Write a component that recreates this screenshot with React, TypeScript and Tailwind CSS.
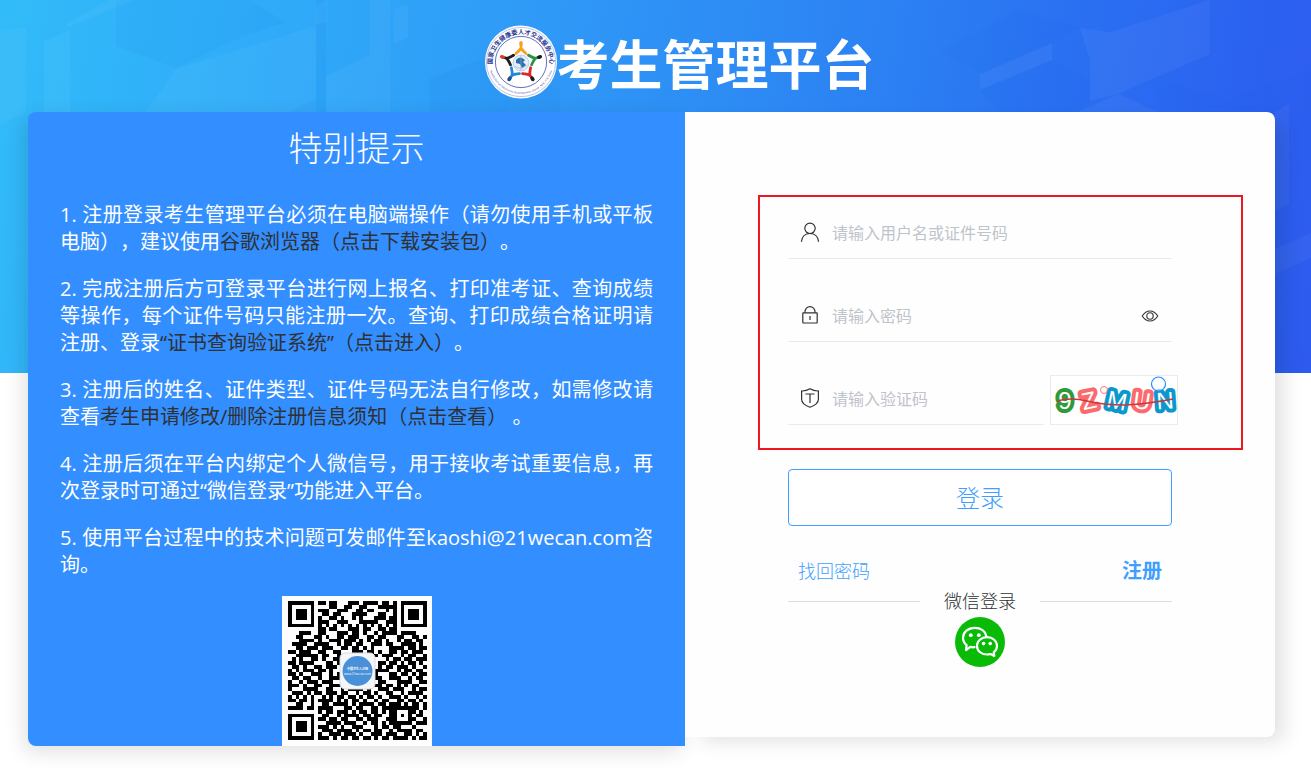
import React, { useState } from "react";

const QR_ROWS = [
  "1111111011011000111011110110101111111",
  "1000001000011001100110001111101000001",
  "1011101011100111001101100010101011101",
  "1011101001101100011110001100101011101",
  "1011101010011010010100011101101011101",
  "1000001011100111000111110011101000001",
  "1111111010101010101010101010101111111",
  "0000000011011000111011001101100000000",
  "0001110011000111011010010111101111000",
  "0011000110100110111001101100011001101",
  "0001111010011101110101011010010110110",
  "0111100111100101101100111011001111010",
  "0011011101110011011010100001111011011",
  "1101110011001100011101101001101101110",
  "0011111101100110010011010111001011001",
  "0101001101001111011110100010110110111",
  "1101111000110111110001101101101011010",
  "0110100110111001011011001011011101001",
  "1010111011010011000111011110010110110",
  "1101001110010110110101110001101101011",
  "0110110010011101011011011001110010110",
  "1001011101110001110110001100011110011",
  "1110100110011110001010111011010101100",
  "1000111100110010111101001110111001011",
  "0111010110111011001011010011001011110",
  "1010101001010110110101101001110100101",
  "1101101011110101011010010110011011010",
  "0011001001101111010111101101110101101",
  "1111011011110001101100110111111111101",
  "0000000010110111010110110101100011010",
  "1111111001100101111011011001101010110",
  "1000001011011011001101110011100011001",
  "1011101000111101110010110101111110111",
  "1011101011101010011100010110110001000",
  "1011101001110111101011011001011110110",
  "1000001010011101110100111011100110101",
  "1111111011101011011011010110111101011",
];

const LATIN_CJK =
  "font-['Open_Sans','Noto_Sans_CJK_SC',sans-serif]";

function QrCode() {
  const d = QR_ROWS.map((row, y) =>
    row
      .split("")
      .map((c, x) => (c === "1" ? `M${x} ${y}h1v1h-1z` : ""))
      .join("")
  ).join("");
  return (
    <svg viewBox="0 0 150 150" className="size-[150px]" role="img" aria-label="微信公众号二维码">
      <rect width="150" height="150" fill="#fdfdfd" />
      <g transform="translate(6 5) scale(3.757)">
        <path d={d} fill="#000" shapeRendering="crispEdges" />
      </g>
      <rect x="58" y="57" width="35" height="36" rx="5" fill="#f4f7fa" stroke="#d5dce3" />
      <circle cx="75.5" cy="75" r="15" fill="#4a90d9" />
      <text x="75.5" y="74" textAnchor="middle" fontSize="3" fontWeight="700" fill="#fff">
        中国卫生人才网
      </text>
      <text x="75.5" y="79" textAnchor="middle" fontSize="3" fill="#fff">
        www.21wecan.com
      </text>
    </svg>
  );
}

const FIGURES = [
  { angle: 0, color: "#f6a21d", head: "#f6a21d" },
  { angle: 72, color: "#2c9145", head: "#1c1c1c" },
  { angle: 144, color: "#e2242b", head: "#1c1c1c" },
  { angle: 216, color: "#1f86dc", head: "#1b4f9c" },
  { angle: 288, color: "#1c1c1c", head: "#e03a24" },
];

function Emblem() {
  return (
    <svg viewBox="0 0 72 74" className="h-[74px] w-[72px] shrink-0" aria-hidden="true">
      <defs>
        <path id="arc-top" d="M8.6 46 A28.6 28.6 0 1 1 63.4 46" />
        <path id="arc-bottom" d="M4.5 44 A32.4 32.4 0 0 0 67.5 44" />
      </defs>
      <ellipse cx="36" cy="37" rx="36" ry="36.6" fill="#fff" />
      <circle cx="36" cy="37" r="34.6" fill="none" stroke="#aab4dd" strokeWidth="0.8" />
      <circle cx="36" cy="37" r="25.6" fill="none" stroke="#5361b4" strokeWidth="0.9" />
      <text fontSize="6.2" fontWeight="700" fill="#26348f">
        <textPath href="#arc-top" startOffset="50%" textAnchor="middle">
          国家卫生健康委人才交流服务中心
        </textPath>
      </text>
      <text fontSize="2.8" fill="#4451a5">
        <textPath href="#arc-bottom" startOffset="50%" textAnchor="middle">
          Health Human Resources Development Center, NHC, P.R.China
        </textPath>
      </text>
      <circle cx="36" cy="38" r="8" fill="#e3edf7" stroke="#9eb6d4" strokeWidth="0.6" />
      <path d="M31 35q4-5 9 0l-2 2 3 3-4 3-2-4-4-1z" fill="#2d6eae" />
      <path d="M29.5 41q6 5 13-1M36 30.500v15" fill="none" stroke="#8ba9cc" strokeWidth="0.6" />
      {FIGURES.map((f) => (
        <g key={f.angle} transform={`rotate(${f.angle} 36 38)`}>
          <path
            d="M36 21V23M36 23q-1.500 2.500-5 5.500M36 23q1.500 2.500 5 5.500"
            fill="none"
            stroke={f.color}
            strokeWidth="2.800"
            strokeLinecap="round"
          />
          <ellipse cx="36" cy="18.500" rx="1.900" ry="2.600" fill={f.head} />
        </g>
      ))}
    </svg>
  );
}

function Banner() {
  return (
    <div
      aria-hidden="true"
      className="absolute inset-x-0 top-0 -z-10 h-[373px] bg-[linear-gradient(100deg,#32bbf9_0%,#2fabf9_20%,#2f9bf7_38%,#2c82f3_64%,#2a6ef2_80%,#2b62f0_92%,#305af0_100%)]"
    >
      <svg viewBox="0 0 1311 373" preserveAspectRatio="none" className="size-full">
        <g fill="#fff" opacity="0.04">
          <path d="M0 32L26 27V112L0 125z" />
          <path d="M44 41L70 30V130H44z" />
          <path d="M66 24L108 0H135L68 27z" />
          <path d="M176 69L316 26V112H146z" />
          <path d="M326 76L370 55V0H390V112H326z" />
          <path d="M315 5L327 0V22L315 25zM394 8L408 5V38L394 44z" />
          <path d="M980 74L1052 43V60L980 90z" />
          <path d="M1080 28L1110 32L1210 0V54L1118 94L1090 101V60z" />
          <path d="M1078 112L1118 94L1158 112z" />
          <path d="M1275 112L1289 104V204L1275 211z" />
          <path d="M1275 249L1311 233V258L1275 274z" />
        </g>
        <g fill="#0a5be0" opacity="0.05">
          <path d="M116 46L176 68L234 40L285 22L250 0H116z" />
          <path d="M940 51L1020 10L1078 28L1052 43L980 74z" />
          <path d="M1090 101V80L1052 60L980 90L1000 112H1078z" />
          <path d="M1150 78L1230 100L1311 70V373H1275V112L1160 104z" />
          <path d="M430 112V78L480 60L560 90V112z" />
          <path d="M290 112L316 98V0H326V112z" />
        </g>
      </svg>
    </div>
  );
}

function UserIcon() {
  return (
    <svg viewBox="0 0 20 22" className="h-[22px] w-5" fill="none" stroke="#303133" strokeWidth="1.2" aria-hidden="true">
      <circle cx="10" cy="6.300" r="5.200" />
      <path d="M1.400 19.800C1.800 14.600 5.300 11.500 10 11.500s8.200 3.100 8.600 8.300" />
    </svg>
  );
}

function LockIcon() {
  return (
    <svg viewBox="0 0 20 22" className="h-[22px] w-5" fill="none" stroke="#303133" strokeWidth="1.2" aria-hidden="true">
      <rect x="2.800" y="7.800" width="14.400" height="10.200" rx="0.400" />
      <path d="M5 7.800V6.600a5 5 0 0 1 10 0v1.200M10 11v4" />
    </svg>
  );
}

function ShieldIcon() {
  return (
    <svg viewBox="0 0 20 22" className="h-[22px] w-5" fill="none" stroke="#303133" strokeWidth="1.2" aria-hidden="true">
      <path d="M10 0.800q4 2.400 8.400 2.200v8.200q0 5-8.400 8-8.400-3-8.400-8V3Q6 3.200 10 0.800z" />
      <path d="M5.500 6h9M10 6v9" />
    </svg>
  );
}

function EyeIcon() {
  return (
    <svg viewBox="0 0 18 14" className="h-[14px] w-[18px]" fill="none" stroke="#303133" strokeWidth="1.1" aria-hidden="true">
      <path d="M1.200 7Q4.500 2 9 2t7.800 5Q13.500 12 9 12T1.200 7z" />
      <circle cx="9" cy="7" r="3.200" />
    </svg>
  );
}

function WechatIcon() {
  return (
    <svg viewBox="0 0 50 50" className="size-[50px]" aria-hidden="true">
      <circle cx="25" cy="25" r="25" fill="#09bb07" />
      <g fill="none" stroke="#fff" strokeWidth="2.200" strokeLinejoin="round" strokeLinecap="round">
        <path d="M19.500 30.200q-2 .3-4.200-.3L11 33.200l.6-5C9.200 26.200 8 23.800 8 20.800 8 15 13.200 10.800 19.600 10.800c6 0 10.600 3.200 11.600 8" />
        <path d="M32 20.200c5.800 0 10 3.800 10 8.700 0 2.700-1.200 4.800-3.300 6.400l.6 3.700-3.700-2q-1.700.5-3.600.5c-5.800 0-10-3.800-10-8.600s4.200-8.700 10-8.700z" />
      </g>
      <g fill="#fff">
        <circle cx="15.800" cy="18.200" r="1.900" />
        <circle cx="23.800" cy="18.200" r="1.900" />
        <circle cx="28.600" cy="26.600" r="1.800" />
        <circle cx="35.200" cy="26.600" r="1.800" />
      </g>
    </svg>
  );
}

const GLYPHS = [
  { char: "9", x: 14, color: "#2f9a3a", angle: 0 },
  { char: "Z", x: 38, color: "#fb6a6c", angle: -12 },
  { char: "M", x: 66, color: "#0c98cc", angle: 12 },
  { char: "U", x: 91, color: "#fb6a6c", angle: 8 },
  { char: "N", x: 114, color: "#0c98cc", angle: -4 },
];

function Captcha() {
  return (
    <svg viewBox="0 0 126 48" className="h-12 w-[126px]" role="img" aria-label="验证码图片">
      <g
        fontFamily="'Liberation Sans', sans-serif"
        fontSize="24"
        textAnchor="middle"
        fill="#fff"
        strokeWidth="8"
        strokeLinejoin="round"
        paintOrder="stroke"
      >
        {GLYPHS.map((g) => (
          <text key={g.char} x={g.x} y="33" stroke={g.color} transform={`rotate(${g.angle} ${g.x} 25)`}>
            {g.char}
          </text>
        ))}
      </g>
      <path d="M6 25Q20 21 36 25T74 29Q96 28 122 23" fill="none" stroke="#c8373c" strokeWidth="1.500" />
      <circle cx="53" cy="14" r="3.500" fill="none" stroke="#fb7a7c" strokeWidth="1" />
      <circle cx="107.500" cy="8" r="7" fill="#fff" fillOpacity="0.600" stroke="#2a8cff" strokeWidth="1.200" />
    </svg>
  );
}

function Notice({ children }: { children: React.ReactNode }) {
  return <p className="text-justify text-xl/[27px]">{children}</p>;
}

function DarkLink({ children }: { children: React.ReactNode }) {
  return (
    <a href="#" className="text-[#303133]">
      {children}
    </a>
  );
}

const FIELD = "flex h-[50px] items-center gap-3 border-b border-[#e9e9ef] pb-[2px] pl-3";
const INPUT =
  "min-w-0 flex-1 bg-transparent text-base text-[#303133] outline-none placeholder:text-[#bfc3cc]";

export default function App() {
  const [shown, setShown] = useState(false);
  return (
    <div
      lang="zh-CN"
      className={`relative isolate ${LATIN_CJK} text-[#303133] [text-spacing-trim:space-all]`}
    >
      <Banner />
      <header className="flex h-28 items-center justify-center pt-3 pr-8 pl-20">
        <div className="flex items-center">
          <Emblem />
          <h1 className="pt-1 text-[53px] leading-none font-bold text-white">考生管理平台</h1>
        </div>
      </header>

      <main className="grid grid-cols-[657fr_590fr] items-start pr-9 pb-7 pl-7">
        <section className="flex flex-col items-center rounded-l-lg bg-[#338eff] px-8 pt-3 text-white shadow-[-4px_6px_20px_rgba(0,0,0,0.12)]">
          <h2 className="text-[34px] leading-[48px] font-light">特别提示</h2>
          <div className="mt-[29px] flex w-full flex-col gap-5">
            <Notice>
              1. 注册登录考生管理平台必须在电脑端操作（请勿使用手机或平板电脑），建议使用
              <DarkLink>谷歌浏览器（点击下载安装包）</DarkLink>。
            </Notice>
            <Notice>
              2. 完成注册后方可登录平台进行网上报名、打印准考证、查询成绩等操作，每个证件号码只能注册一次。查询、打印成绩合格证明请注册、登录
              <DarkLink>“证书查询验证系统”（点击进入）</DarkLink>。
            </Notice>
            <Notice>
              3. 注册后的姓名、证件类型、证件号码无法自行修改，如需修改请查看
              <DarkLink>考生申请修改/删除注册信息须知（点击查看）</DarkLink>
              {" 。"}
            </Notice>
            <Notice>
              4. 注册后须在平台内绑定个人微信号，用于接收考试重要信息，再次登录时可通过“微信登录”功能进入平台。
            </Notice>
            <Notice>5. 使用平台过程中的技术问题可发邮件至kaoshi@21wecan.com咨询。</Notice>
          </div>
          <div className="mt-[18px]">
            <QrCode />
          </div>
        </section>

        <section className="rounded-r-lg bg-[#fefefe] pt-[83px] pr-8 pb-[70px] pl-[73px] shadow-[12px_8px_20px_-4px_rgba(0,0,0,0.12)]">
          <form onSubmit={(e) => e.preventDefault()}>
            <div className="flex flex-col gap-[33px] border-2 border-[#ee1620] pt-3 pr-[69px] pb-[23px] pl-7">
              <div className={FIELD}>
                <UserIcon />
                <input className={INPUT} aria-label="用户名或证件号码" placeholder="请输入用户名或证件号码" />
              </div>
              <div className={`${FIELD} pr-[13px]`}>
                <LockIcon />
                <input
                  className={INPUT}
                  type={shown ? "text" : "password"}
                  aria-label="密码"
                  placeholder="请输入密码"
                />
                <button type="button" aria-label="显示密码" onClick={() => setShown(!shown)}>
                  <EyeIcon />
                </button>
              </div>
              <div className="-mr-[6px] flex gap-[6px]">
                <div className={`${FIELD} min-w-0 flex-1`}>
                  <ShieldIcon />
                  <input className={INPUT} aria-label="验证码" placeholder="请输入验证码" />
                </div>
                <button type="button" aria-label="刷新验证码" className="h-[50px] shrink-0 border border-[#ebebeb] bg-white">
                  <Captcha />
                </button>
              </div>
            </div>

            <div className="mt-[19px] pr-[71px] pl-[30px]">
              <button
                type="submit"
                className="h-[57px] w-full rounded border border-[#409eff] bg-white text-2xl font-light text-[#409eff]"
              >
                登录
              </button>
              <div className="mt-[30px] flex items-center justify-between px-[10px] text-[#409eff]">
                <a href="#" className="text-lg/[30px] font-light">
                  找回密码
                </a>
                <a href="#" className="text-xl/[30px] font-bold">
                  注册
                </a>
              </div>
              <div className="flex items-center justify-between">
                <div className="h-px w-[132px] bg-[#dcdcdc]" />
                <span className="text-lg/[30px] font-light">微信登录</span>
                <div className="h-px w-[132px] bg-[#dcdcdc]" />
              </div>
              <div className="flex justify-center pt-px">
                <button type="button" aria-label="微信登录">
                  <WechatIcon />
                </button>
              </div>
            </div>
          </form>
        </section>
      </main>
    </div>
  );
}
